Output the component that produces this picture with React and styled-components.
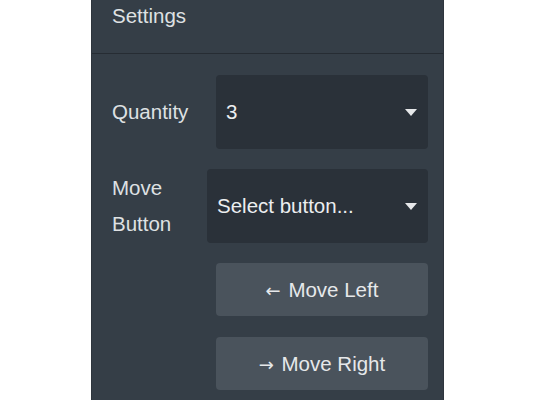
import React from 'react';
import styled, { createGlobalStyle } from 'styled-components';

const GlobalStyle = createGlobalStyle`
  html, body {
    margin: 0;
    padding: 0;
    background: #ffffff;
    font-family: "Liberation Sans", Arial, sans-serif;
  }
`;

const Page = styled.div`
  display: flex;
  height: 400px;
  padding-left: 91px;
  box-sizing: border-box;
  overflow: hidden;
`;

const Panel = styled.aside`
  width: 353px;
  height: 100%;
  box-sizing: border-box;
  background: #353e47;
  border-left: 1px solid #2e353d;
  border-right: 1px solid #2e353d;
  display: flex;
  flex-direction: column;
  color: #e4e6e8;
`;

const Header = styled.div`
  height: 54px;
  box-sizing: border-box;
  padding: 2px 0 0 20px;
  font-size: 20.5px;
  line-height: 28px;
  color: #dfe1e3;
  border-bottom: 1px solid #262c33;
`;

const Body = styled.div`
  display: flex;
  flex-direction: column;
  padding: 21px 15px 0 20px;
  gap: 20px;
`;

const Row = styled.div`
  display: flex;
  align-items: center;
`;

const Label = styled.label`
  width: ${(p) => p.$width}px;
  flex-shrink: 0;
  font-size: 20.5px;
  line-height: 36px;
  color: #dfe1e3;
`;

const Select = styled.div`
  flex: 1;
  height: 74px;
  box-sizing: border-box;
  display: flex;
  align-items: center;
  justify-content: space-between;
  padding: 0 11px 0 10px;
  background: #2a3139;
  border-radius: 4px;
  font-size: 20.5px;
  color: #eceef0;
`;

const Caret = styled.span`
  width: 0;
  height: 0;
  border-left: 6.5px solid transparent;
  border-right: 6.5px solid transparent;
  border-top: 7.5px solid #e6e8ea;
`;

const Actions = styled.div`
  display: flex;
  flex-direction: column;
  gap: 21px;
  padding-left: 104px;
`;

const ActionButton = styled.button`
  height: 53px;
  border: none;
  border-radius: 4px;
  background: #4a535c;
  color: #e6e8ea;
  font-family: "Liberation Sans", Arial, sans-serif;
  font-size: 20.5px;
  cursor: pointer;
  &:hover {
    background: #525c66;
  }
`;

const Arrow = styled.span`
  font-family: "DejaVu Sans", sans-serif;
  font-size: 18px;
  margin-right: 2px;
`;

const App = () => {
  return (
    <>
      <GlobalStyle />
      <Page>
        <Panel>
          <Header>Settings</Header>
          <Body>
            <Row>
              <Label $width={104}>Quantity</Label>
              <Select>
                <span>3</span>
                <Caret />
              </Select>
            </Row>
            <Row>
              <Label $width={95}>
                Move
                <br />
                Button
              </Label>
              <Select>
                <span>Select button...</span>
                <Caret />
              </Select>
            </Row>
            <Actions>
              <ActionButton>
                <Arrow>←</Arrow> Move Left
              </ActionButton>
              <ActionButton>
                <Arrow>→</Arrow> Move Right
              </ActionButton>
            </Actions>
          </Body>
        </Panel>
      </Page>
    </>
  );
};

export default App;
